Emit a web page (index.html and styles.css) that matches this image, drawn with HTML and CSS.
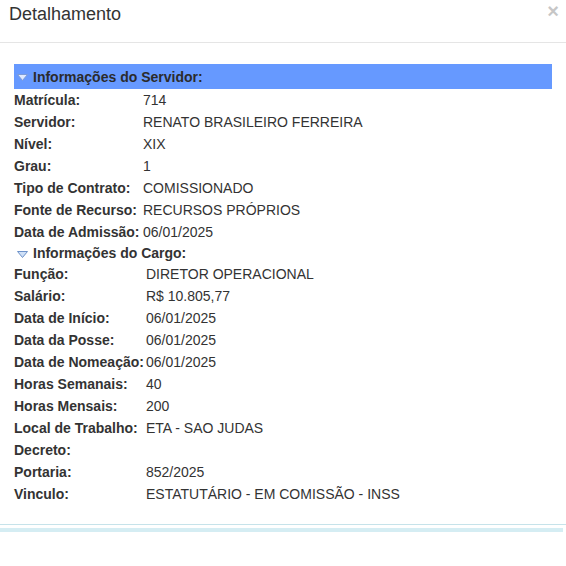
FILE: index.html
```html
<!DOCTYPE html>
<html lang="pt-BR">

<head>
    <meta charset="UTF-8">
    <meta name="viewport" content="width=device-width, initial-scale=1.0">
    <title>Detalhamento</title>
    <link rel="stylesheet" href="styles.css">
</head>

<body>
    <div class="modal">
        <div class="cabecalho">
            <h4 class="titulo">Detalhamento</h4>
            <span class="fechar">&times;</span>
        </div>

        <div class="corpo">
            <div class="barra">
                <svg class="seta" width="11" height="7" viewBox="0 0 11 7">
                    <path d="M0.5 0.5 L10.5 0.5 L5.5 6.5 Z" fill="#dde9ff" stroke="#7a9ad8" stroke-width="1" />
                </svg>
                Informações do Servidor:
            </div>
            <table class="dados servidor">
                <tr><td class="rotulo">Matrícula:</td><td>714</td></tr>
                <tr><td class="rotulo">Servidor:</td><td>RENATO BRASILEIRO FERREIRA</td></tr>
                <tr><td class="rotulo">Nível:</td><td>XIX</td></tr>
                <tr><td class="rotulo">Grau:</td><td>1</td></tr>
                <tr><td class="rotulo">Tipo de Contrato:</td><td>COMISSIONADO</td></tr>
                <tr><td class="rotulo">Fonte de Recurso:</td><td>RECURSOS PRÓPRIOS</td></tr>
                <tr><td class="rotulo">Data de Admissão:</td><td>06/01/2025</td></tr>
            </table>

            <div class="subtitulo">
                <svg class="seta" width="11" height="7" viewBox="0 0 11 7">
                    <path d="M0.5 0.5 L10.5 0.5 L5.5 6.5 Z" fill="#cfe0f7" stroke="#6e92c9" stroke-width="1" />
                </svg>
                Informações do Cargo:
            </div>
            <table class="dados cargo">
                <tr><td class="rotulo">Função:</td><td>DIRETOR OPERACIONAL</td></tr>
                <tr><td class="rotulo">Salário:</td><td>R$ 10.805,77</td></tr>
                <tr><td class="rotulo">Data de Início:</td><td>06/01/2025</td></tr>
                <tr><td class="rotulo">Data da Posse:</td><td>06/01/2025</td></tr>
                <tr><td class="rotulo">Data de Nomeação:</td><td>06/01/2025</td></tr>
                <tr><td class="rotulo">Horas Semanais:</td><td>40</td></tr>
                <tr><td class="rotulo">Horas Mensais:</td><td>200</td></tr>
                <tr><td class="rotulo">Local de Trabalho:</td><td>ETA - SAO JUDAS</td></tr>
                <tr><td class="rotulo">Decreto:</td><td></td></tr>
                <tr><td class="rotulo">Portaria:</td><td>852/2025</td></tr>
                <tr><td class="rotulo">Vinculo:</td><td>ESTATUTÁRIO - EM COMISSÃO - INSS</td></tr>
            </table>
        </div>

        <div class="rodape">
            <div class="linha1"></div>
            <div class="linha2"></div>
        </div>
    </div>
</body>

</html>
```

FILE: styles.css
```css
body {
    margin: 0;
    background-color: #fff;
    font-family: "Liberation Sans", Arial, sans-serif;
    color: #333;
}

.modal {
    width: 566px;
}

.cabecalho {
    display: flex;
    justify-content: space-between;
    align-items: flex-start;
    height: 43px;
    border-bottom: 1px solid #e5e5e5;
    padding: 0 9px;
    box-sizing: border-box;
}

.titulo {
    margin: 0;
    padding-top: 4px;
    font-size: 18px;
    font-weight: normal;
    color: #333;
}

.fechar {
    font-size: 20px;
    font-weight: bold;
    line-height: 20px;
    color: #000;
    opacity: 0.22;
    margin-right: -2px;
    padding-top: 1px;
}

.corpo {
    padding: 21px 14px 0 14px;
    height: 461px;
    box-sizing: border-box;
    font-size: 14px;
}

.barra {
    display: flex;
    align-items: center;
    height: 25px;
    background-color: #6699ff;
    font-weight: bold;
    padding-left: 3px;
    color: #2b2b2b;
}

.subtitulo {
    display: flex;
    align-items: center;
    height: 20px;
    font-weight: bold;
    padding-left: 3px;
}

.seta {
    margin-right: 5px;
    margin-top: 2px;
}

.dados {
    border-collapse: collapse;
}

.dados td {
    height: 22px;
    padding: 0;
    vertical-align: middle;
    white-space: nowrap;
}

.rotulo {
    font-weight: bold;
}

.servidor .rotulo {
    width: 129px;
}

.cargo .rotulo {
    width: 132px;
}

.rodape {
    padding-top: 20px;
}

.linha1 {
    height: 1px;
    background-color: #c6e3ea;
}

.linha2 {
    height: 4px;
    width: 563px;
    margin-top: 3px;
    background-color: #d5edf3;
}
```
